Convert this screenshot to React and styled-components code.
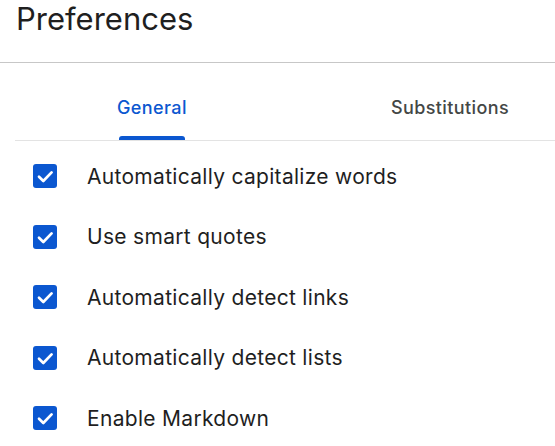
import styled, { createGlobalStyle } from "styled-components";

const GlobalStyle = createGlobalStyle`
  body {
    margin: 0;
    background: #ffffff;
    font-family: Inter, Roboto, "Liberation Sans", sans-serif;
    color: #1f1f1f;
  }
`;

const options = [
  { label: "Automatically capitalize words", checked: true },
  { label: "Use smart quotes", checked: true },
  { label: "Automatically detect links", checked: true },
  { label: "Automatically detect lists", checked: true },
  { label: "Enable Markdown", checked: true },
];

const App = () => {
  return (
    <Page>
      <GlobalStyle />
      <Header>
        <Title>Preferences</Title>
      </Header>
      <Body>
        <TabRow>
          <Tab active>General</Tab>
          <Tab>Substitutions</Tab>
        </TabRow>
        <OptionList>
          {options.map((opt) => (
            <Option key={opt.label}>
              <Checkbox checked={opt.checked}>
                <svg width="24" height="24" viewBox="0 0 24 24">
                  <path
                    d="M6 12.8 L10.3 17 L18.6 8.4"
                    fill="none"
                    stroke="#ffffff"
                    strokeWidth="2.7"
                    strokeLinecap="round"
                    strokeLinejoin="round"
                  />
                </svg>
              </Checkbox>
              <Label>{opt.label}</Label>
            </Option>
          ))}
        </OptionList>
      </Body>
    </Page>
  );
};

export default App;

const Page = styled.div`
  width: 555px;
  height: 446px;
  overflow: hidden;
`;

const Header = styled.div`
  height: 63px;
  padding-left: 16px;
  border-bottom: 1px solid #c7c7c7;
  box-sizing: border-box;
`;

const Title = styled.h1`
  margin: 0;
  font-size: 31px;
  font-weight: 400;
  line-height: 38px;
  color: #1f1f1f;
`;

const Body = styled.div`
  padding-left: 15px;
`;

const TabRow = styled.div`
  display: flex;
  height: 78px;
  padding-left: 73px;
  gap: 146px;
  border-bottom: 1px solid #e3e3e3;
  box-sizing: border-box;
`;

const Tab = styled.div`
  position: relative;
  display: flex;
  align-items: center;
  padding: 0 29px;
  padding-top: 11px;
  font-size: 18px;
  font-weight: 500;
  letter-spacing: 0.4px;
  color: ${(p) => (p.active ? "#0b57d0" : "#444746")};

  &::after {
    content: "";
    display: ${(p) => (p.active ? "block" : "none")};
    position: absolute;
    left: 31px;
    right: 31px;
    bottom: 0;
    height: 4px;
    border-radius: 3px 3px 0 0;
    background: #0b57d0;
  }
`;

const OptionList = styled.div`
  display: flex;
  flex-direction: column;
  padding-top: 5px;
`;

const Option = styled.div`
  display: flex;
  align-items: center;
  height: 60.5px;
  padding-left: 18px;
`;

const Checkbox = styled.div`
  display: flex;
  align-items: center;
  justify-content: center;
  width: 24px;
  height: 24px;
  border-radius: 3px;
  background: ${(p) => (p.checked ? "#0b57d0" : "transparent")};
  border: ${(p) => (p.checked ? "none" : "2px solid #444746")};
  box-sizing: border-box;
`;

const Label = styled.span`
  margin-left: 30px;
  font-size: 21px;
  letter-spacing: 0.3px;
  color: #1f1f1f;
`;
